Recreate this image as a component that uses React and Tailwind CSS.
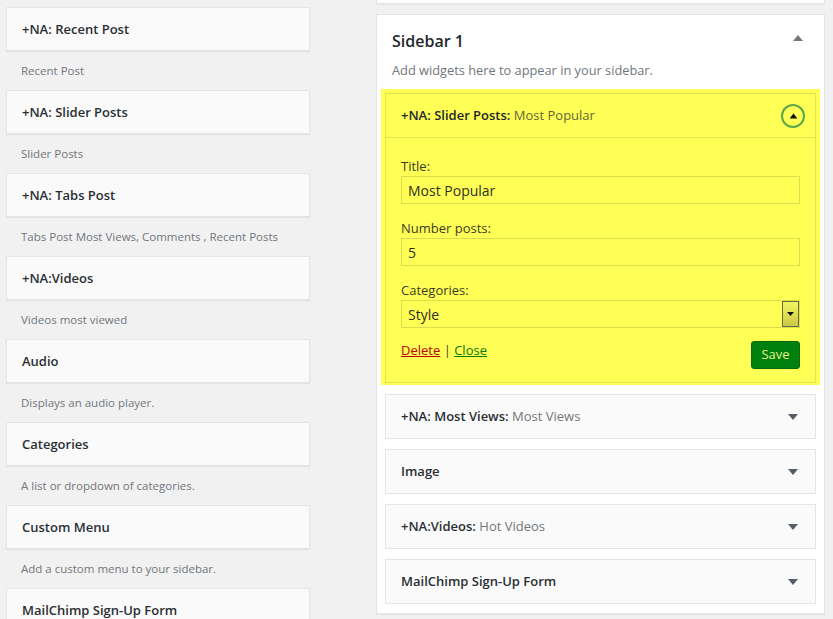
import React from "react";

const leftItems = [
  ["+NA: Recent Post", "Recent Post"],
  ["+NA: Slider Posts", "Slider Posts"],
  ["+NA: Tabs Post", "Tabs Post Most Views, Comments , Recent Posts"],
  ["+NA:Videos", "Videos most viewed"],
  ["Audio", "Displays an audio player."],
  ["Categories", "A list or dropdown of categories."],
  ["Custom Menu", "Add a custom menu to your sidebar."],
  ["MailChimp Sign-Up Form", ""],
];

const rightItems = [
  ["+NA: Most Views:", "Most Views"],
  ["Image", ""],
  ["+NA:Videos:", "Hot Videos"],
  ["MailChimp Sign-Up Form", ""],
];

function DownTri({ color = "#555d66" }) {
  return (
    <svg width="12" height="8" viewBox="0 0 12 8">
      <path d="M1 1 L11 1 L6 7 Z" fill={color} />
    </svg>
  );
}

export default function App() {
  return (
    <div
      className="flex w-[833px] h-[619px] overflow-hidden bg-[#f1f1f1] text-[#23282d]"
      style={{ fontFamily: "'Open Sans', 'Noto Sans', sans-serif" }}
    >
      {/* Left column */}
      <div className="w-[304px] ml-[6px] pt-[7px] flex flex-col shrink-0">
        {leftItems.map(([t, d], i) => (
          <div key={i} className="flex flex-col">
            <div className="h-[44px] bg-[#fafafa] border border-[#e5e5e5] shadow-[0_1px_1px_rgba(0,0,0,0.06)] flex items-center px-[15px] pt-[1px] text-[13px] font-semibold text-[#2a2f34]">
              {t}
            </div>
            <div className="h-[39px] flex items-center px-[15px] text-[11.5px] text-[#72777c]">
              {d}
            </div>
          </div>
        ))}
      </div>

      {/* Right column */}
      <div className="ml-[66px] w-[449px] shrink-0 flex flex-col">
        <div className="h-[4px] bg-white border-x border-b border-[#e5e5e5] shadow-[0_1px_1px_rgba(0,0,0,0.04)]" />
        <div className="mt-[10px] bg-white border border-[#e5e5e5] shadow-[0_1px_1px_rgba(0,0,0,0.04)] pb-[9px]">
          <div className="flex items-center justify-between pl-[15px] pr-[20px] pt-[14px] h-[38px]">
            <div className="text-[16px] font-semibold text-[#23282d]">Sidebar 1</div>
            <svg width="12" height="8" viewBox="0 0 12 8" className="mb-[6px]">
              <path d="M1 7 L11 7 L6 1 Z" fill="#72777c" />
            </svg>
          </div>
          <div className="pl-[15px] h-[36px] flex items-center text-[12.8px] text-[#72777c]">
            Add widgets here to appear in your sidebar.
          </div>

          <div className="px-[8px] flex flex-col">
            {/* Expanded widget with yellow highlight */}
            <div className="-mx-[4px] bg-[#ffff55] px-[4px] pt-[4px] pb-[2px]">
              <div className="border border-[#e3e34c] bg-[#ffff55]">
                <div className="h-[44px] border-b border-[#e3e34c] flex items-center justify-between pl-[15px] pr-[10px] pt-[1px]">
                  <div className="text-[13px]">
                    <span className="font-semibold text-[#23282d]">+NA: Slider Posts:</span>{" "}
                    <span className="text-[#66663a]">Most Popular</span>
                  </div>
                  <div className="w-[24px] h-[24px] rounded-full border-[2px] border-[#5aa84a] flex items-center justify-center">
                    <svg width="9" height="6" viewBox="0 0 10 7">
                      <path d="M0.5 6.5 L9.5 6.5 L5 0.5 Z" fill="#111" />
                    </svg>
                  </div>
                </div>
                <div className="px-[15px] pt-[19px] pb-[13px] text-[13px] text-[#3c3c28]">
                  <div className="leading-[19px]">Title:</div>
                  <div className="h-[28px] border border-[#dcdc50] flex items-center px-[6px] text-[14px] text-[#2f2f1e]">
                    Most Popular
                  </div>
                  <div className="leading-[19px] mt-[15px]">Number posts:</div>
                  <div className="h-[28px] border border-[#dcdc50] flex items-center px-[6px] text-[14px] text-[#2f2f1e]">
                    5
                  </div>
                  <div className="leading-[19px] mt-[15px]">Categories:</div>
                  <div className="h-[28px] border border-[#dcdc50] flex items-center justify-between pl-[6px] pr-[0px] text-[14px] text-[#2f2f1e]">
                    <span>Style</span>
                    <div className="w-[17px] h-[26px] border border-[#6c6c3a] bg-gradient-to-b from-[#f5f560] to-[#c8c848] flex items-center justify-center">
                      <svg width="7" height="4" viewBox="0 0 7 4">
                        <path d="M0 0 L7 0 L3.5 4 Z" fill="#111" />
                      </svg>
                    </div>
                  </div>
                  <div className="flex items-center justify-between mt-[13px]">
                    <div className="text-[13px] mt-[-8px]">
                      <span className="text-[#c00000] underline">Delete</span>
                      <span className="text-[#3c3c28]"> | </span>
                      <span className="text-[#0a7a0a] underline">Close</span>
                    </div>
                    <div className="w-[49px] h-[28px] rounded-[3px] bg-[#00800f] border border-[#006a0a] flex items-center justify-center text-[13px] text-[#e8f28a]">
                      Save
                    </div>
                  </div>
                </div>
              </div>
            </div>

            {rightItems.map(([a, b], i) => (
              <div
                key={i}
                className={`${i === 0 ? "mt-[9px]" : "mt-[10px]"} h-[45px] bg-[#fafafa] border border-[#e5e5e5] flex items-center justify-between pl-[15px] pr-[16px]`}
              >
                <div className="text-[13px]">
                  <span className="font-semibold text-[#2a2f34]">{a}</span>
                  {b && <span className="text-[#72777c]"> {b}</span>}
                </div>
                <DownTri />
              </div>
            ))}
          </div>
        </div>
      </div>
    </div>
  );
}
